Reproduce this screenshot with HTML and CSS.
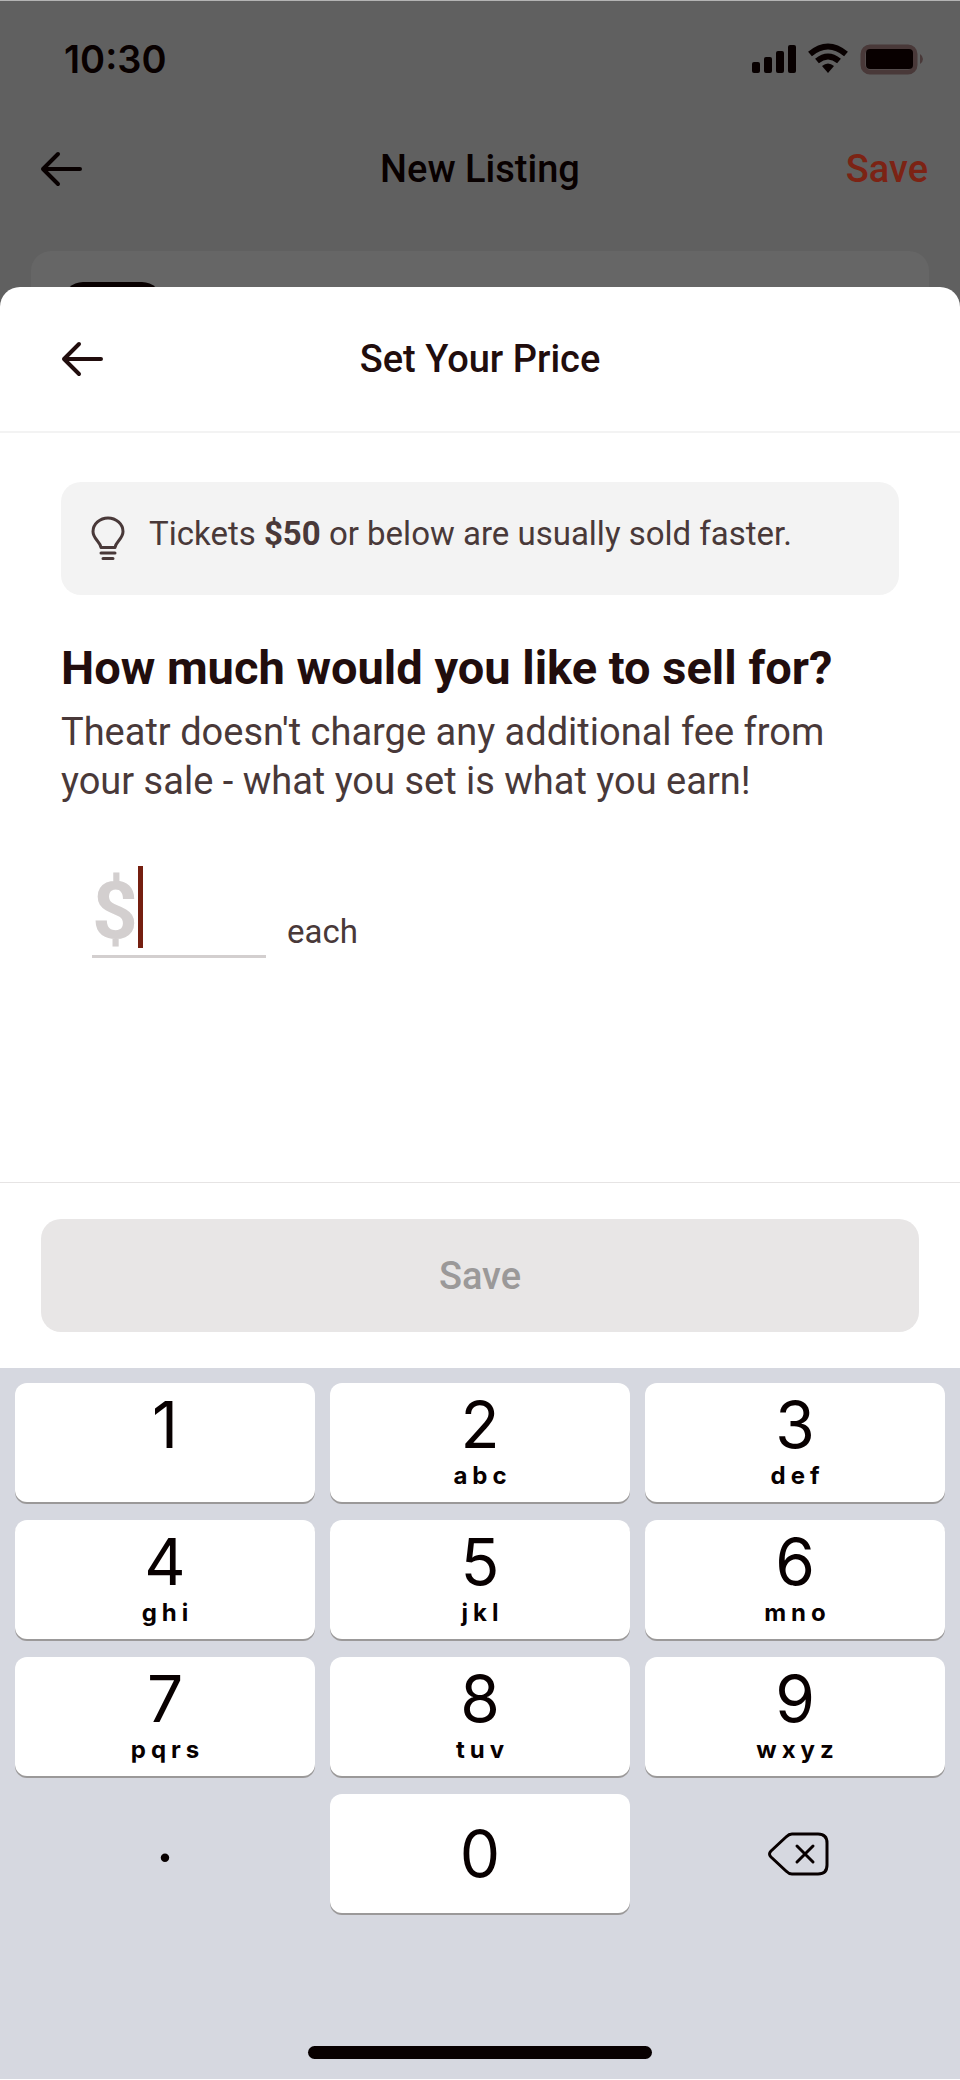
FILE: index.html
```html
<!DOCTYPE html>
<html lang="en">
<head>
<meta charset="utf-8">
<meta name="viewport" content="width=device-width, initial-scale=1">
<title>Set Your Price</title>
<link rel="stylesheet" href="styles.css">
</head>
<body>
<div class="screen">
  <div class="backdrop">
    <div class="status">
      <span class="time">10:30</span>
      <svg class="status-icons" width="172" height="30" viewBox="0 0 172 30" aria-hidden="true">
        <rect x="0" y="18" width="8" height="11" rx="2"/>
        <rect x="12" y="13" width="8" height="16" rx="2"/>
        <rect x="24" y="7" width="8" height="22" rx="2"/>
        <rect x="36" y="1" width="8" height="28" rx="2"/>
        <path class="wave" d="M58 10Q76-5 94 10M65 17Q76 8 87 17"/>
        <path d="M70 22Q76 17 82 22L76 29Z"/>
        <rect class="shell" x="111" y="3" width="52" height="25" rx="7"/>
        <rect x="114" y="5" width="47" height="20" rx="4"/>
        <path class="nub" d="M168 10Q171 12 171 15T168 20Z"/>
      </svg>
    </div>
    <header class="bar page-bar">
      <button class="icon-button" aria-label="Back">
        <svg width="42" height="34" viewBox="0 0 42 34" class="arrow"><path d="M18 2L3 17L18 32M3 17H40"/></svg>
      </button>
      <h2 class="title">New Listing</h2>
      <button class="save-link">Save</button>
    </header>
    <div class="card"><div class="thumb"></div></div>
  </div>

  <main class="sheet">
    <header class="bar sheet-bar">
      <button class="icon-button" aria-label="Back">
        <svg width="42" height="34" viewBox="0 0 42 34" class="arrow"><path d="M18 2L3 17L18 32M3 17H40"/></svg>
      </button>
      <h1 class="title">Set Your Price</h1>
      <span></span>
    </header>
    <div class="content">
      <div class="tip">
        <svg width="34" height="46" viewBox="0 0 34 46" class="bulb" aria-hidden="true">
          <path d="M10 31.500C9 25 2 23 2 15.500C2 8 9 2 17 2S32 8 32 15.500C32 23 25 25 24 31.500Z"/>
          <path d="M10 37H24M12 42.500H22"/>
        </svg>
        <p>Tickets <b>$50</b> or below are usually sold faster.</p>
      </div>
      <h2 class="question">How much would you like to sell for?</h2>
      <p class="note">Theatr doesn't charge any additional fee from your sale - what you set is what you earn!</p>
      <div class="price">
        <label class="field">
          <span class="currency">$</span>
          <span class="caret"></span>
          <input class="amount" type="text" inputmode="decimal" aria-label="Price">
        </label>
        <span class="each">each</span>
      </div>
    </div>
    <footer class="footer"><button class="save" disabled>Save</button></footer>
  </main>

  <div class="keyboard">
    <div class="keys">
      <button class="key">1</button>
      <button class="key">2<small>abc</small></button>
      <button class="key">3<small>def</small></button>
      <button class="key">4<small>ghi</small></button>
      <button class="key">5<small>jkl</small></button>
      <button class="key">6<small>mno</small></button>
      <button class="key">7<small>pqrs</small></button>
      <button class="key">8<small>tuv</small></button>
      <button class="key">9<small>wxyz</small></button>
      <button class="key plain dot">.</button>
      <button class="key zero">0</button>
      <button class="key plain delete" aria-label="Delete">
        <svg width="60" height="44" viewBox="0 0 60 44" class="erase"><path d="M23 2H49Q58 2 58 11V33Q58 42 49 42H23Q20 42 17 39L2 25Q-1 22 2 19L17 5Q20 2 23 2ZM28 14L44 30M44 14L28 30"/></svg>
      </button>
    </div>
    <div class="home"></div>
  </div>
</div>
</body>
</html>
```

FILE: styles.css
```css
* { box-sizing: border-box; }
body { margin: 0; background: #606060; color: #210d0d; font-family: Roboto, sans-serif; }
h1, h2, p { margin: 0; }
button { border: 0; padding: 0; background: none; font: inherit; color: inherit; }
svg { display: block; overflow: visible; }
.screen { display: flex; flex-direction: column; min-height: 100vh; }

.backdrop { border-top: 1px solid #b4b4b4; color: #080000; }
.status { display: flex; align-items: center; justify-content: space-between; height: 116px; padding: 0 36px 0 64px; }
.time { font: 600 38px/40px Inter, sans-serif; }
.status-icons { fill: #080000; }
.status-icons .wave { fill: none; stroke: #080000; stroke-width: 6px; }
.status-icons .shell { fill: none; stroke: #493939; stroke-width: 5px; }
.status-icons .nub { fill: #493939; }

.bar { display: grid; grid-template-columns: 1fr auto 1fr; align-items: center; }
.page-bar { height: 104px; padding: 0 32px; }
.page-bar .icon-button { padding-left: 8px; }
.title, .save-link, .save { font-size: 38px; line-height: 48px; font-weight: 500; }
.icon-button { justify-self: start; }
.arrow, .bulb, .erase { fill: none; stroke: currentColor; stroke-width: 4px; stroke-linecap: round; stroke-linejoin: round; }
.save-link { justify-self: end; color: #7c2314; }
.card { height: 56px; margin: 30px 31px 0; padding: 31px 32px 0; border-radius: 20px 20px 0 0; background: #666; }
.thumb { width: 99px; height: 25px; border-radius: 20px 20px 0 0; background: #080000; }

.sheet { flex: 1; display: flex; flex-direction: column; margin-top: -20px; border-radius: 20px 20px 0 0; background: #fff; }
.sheet-bar { height: 146px; padding: 0 61px; border-bottom: 2px solid #f3f3f3; }
.content { flex: 1; padding: 49px 61px 0; color: #493939; }
.tip { display: flex; align-items: center; gap: 24px; min-height: 113px; padding: 0 30px; border-radius: 20px; background: #f3f3f3; font-size: 33px; line-height: 40px; }
.tip p { padding-bottom: 10px; }
.bulb, .erase { stroke-width: 3px; }
.question { margin-top: 41px; font-size: 47px; line-height: 64px; color: #210d0d; }
.note { font-size: 38px; line-height: 49px; margin-top: 8px; }
.price { display: flex; align-items: flex-end; gap: 21px; margin-top: 60px; padding-left: 31px; }
.field { display: flex; align-items: center; width: 174px; height: 92px; border-bottom: 3px solid #d3cfcf; }
.currency { color: #d3cfcf; font-size: 80px; line-height: 88px; font-weight: 700; }
.caret { flex: none; width: 5px; height: 82px; margin-bottom: 8px; background: #751f10; }
.amount { flex: 1; min-width: 0; border: 0; padding: 0; background: none; font: inherit; font-size: 80px; line-height: 88px; font-weight: 700; color: #210d0d; outline: 0; }
.each { font-size: 33px; line-height: 40px; padding-bottom: 6px; }
.footer { padding: 36px 41px; border-top: 1px solid #e6e4e4; }
.save { display: block; width: 100%; height: 113px; border-radius: 20px; background: #e8e6e6; color: #9b9999; }

.keyboard { padding: 15px 15px 20px; border-bottom: 1px solid #fff; background: #d6d8e0; font-family: Inter, sans-serif; color: #080000; }
.keys { display: grid; grid-template-columns: repeat(3, 1fr); gap: 18px 15px; }
.key { display: flex; flex-direction: column; align-items: center; height: 119px; padding-top: 5px; border-radius: 12px; background: #fff; box-shadow: 0 2px #9b9999; font-size: 64px; line-height: 74px; }
.key small { padding-left: 5px; font-size: 24px; line-height: 28px; font-weight: 700; letter-spacing: 5px; }
.zero, .plain { justify-content: center; padding-top: 0; }
.plain { background: none; box-shadow: none; }
.dot { padding-bottom: 30px; }
.delete { padding-left: 8px; }
.home { width: 37%; height: 13px; margin: 133px auto 0; border-radius: 7px; background: #080000; }
```
